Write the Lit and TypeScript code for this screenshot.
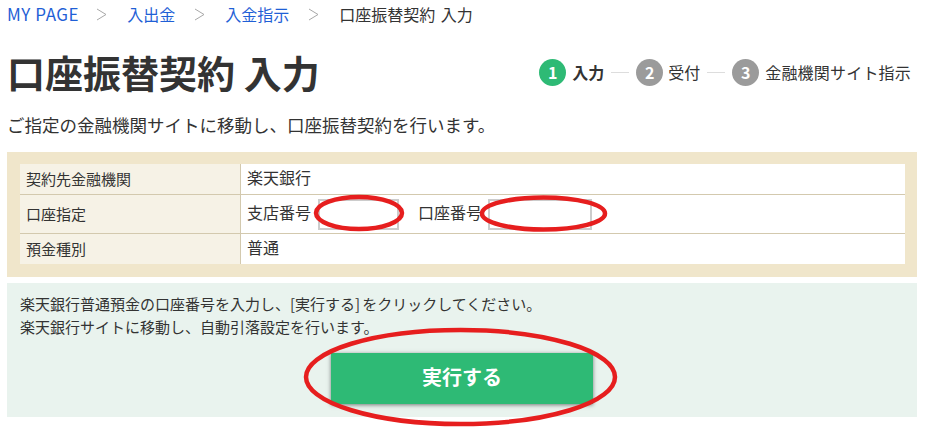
import { LitElement, css, html, svg } from "lit";
import { customElement, property } from "lit/decorators.js";

type Crumb = { label: string; link: boolean; latin?: boolean };
type Step = { num: number; label: string; active?: boolean };

const crumbs: Crumb[] = [
  { label: "MY PAGE", link: true, latin: true },
  { label: "入出金", link: true },
  { label: "入金指示", link: true },
  { label: "口座振替契約 入力", link: false },
];

const steps: Step[] = [
  { num: 1, label: "入力", active: true },
  { num: 2, label: "受付" },
  { num: 3, label: "金融機関サイト指示" },
];

// red marker circles drawn over the finished page
const marks = [
  { cx: 359, cy: 213, rx: 43, ry: 16 },
  { cx: 543.5, cy: 213.5, rx: 61.5, ry: 16 },
  { cx: 460.5, cy: 377, rx: 154.5, ry: 47 },
];

@customElement("app-root")
export class AppRoot extends LitElement {
  @property({ attribute: false })
  crumbs = crumbs;

  render() {
    return html`
      <div class="page">
        <nav class="crumbs">
          ${this.crumbs.map(
            (c, i) => html`
              ${i > 0
                ? html`<svg class="sep" width="11" height="13" viewBox="0 0 11 13">
                    <path d="M1 1l9 5.5L1 12" fill="none" stroke="#a8a8a8" stroke-width="1" />
                  </svg>`
                : ""}
              <span class="${c.link ? "link" : "here"} ${c.latin ? "latin" : ""}">${c.label}</span>
            `
          )}
        </nav>

        <header class="head">
          <h1>口座振替契約 入力</h1>
          <ol class="steps">
            ${steps.map(
              (s, i) => html`
                ${i > 0 ? html`<li class="dash"></li>` : ""}
                <li class=${s.active ? "step active" : "step"}>
                  <span class="num">${s.num}</span>
                  <span class="label">${s.label}</span>
                </li>
              `
            )}
          </ol>
        </header>

        <p class="lead">ご指定の金融機関サイトに移動し、口座振替契約を行います。</p>

        <section class="form">
          <div class="table">
            <div class="row">
              <div class="th">契約先金融機関</div>
              <div class="td">楽天銀行</div>
            </div>
            <div class="row tall">
              <div class="th">口座指定</div>
              <div class="td">
                <span>支店番号</span>
                <span class="input branch"></span>
                <span class="second">口座番号</span>
                <span class="input account"></span>
              </div>
            </div>
            <div class="row">
              <div class="th">預金種別</div>
              <div class="td">普通</div>
            </div>
          </div>
        </section>

        <section class="notice">
          <p>
            楽天銀行普通預金の口座番号を入力し、[実行する<span class="bracket">]</span
            >をクリックしてください。
          </p>
          <p>楽天銀行サイトに移動し、自動引落設定を行います。</p>
          <div class="action"><button>実行する</button></div>
        </section>

        <svg class="marks" width="943" height="441" viewBox="0 0 943 441">
          ${marks.map(
            (m) => svg`<ellipse cx=${m.cx} cy=${m.cy} rx=${m.rx} ry=${m.ry}
              fill="none" stroke="#e61e1e" stroke-width="4.5" />`
          )}
        </svg>
      </div>
    `;
  }

  static styles = css`
    :host {
      display: block;
      width: 943px;
      height: 441px;
      overflow: hidden;
      background: #fff;
      color: #333;
      font-family: "Noto Sans CJK JP", "Noto Sans", sans-serif;
    }
    .page {
      position: relative;
      box-sizing: border-box;
      height: 441px;
      padding: 0 26px 0 7px;
    }
    .crumbs {
      display: flex;
      align-items: center;
      height: 28px;
      font-size: 16px;
      line-height: 28px;
    }
    .sep {
      margin: 0 20px 0 19px;
    }
    .link {
      color: #1f5fd6;
    }
    .latin {
      font-size: 17px;
      letter-spacing: 0.55px;
      margin-right: -2px;
    }
    .here {
      color: #333;
      word-spacing: 2px;
    }
    .head {
      display: flex;
      justify-content: space-between;
      align-items: center;
      height: 58px;
      margin-top: 15px;
    }
    h1 {
      margin: 0;
      font-size: 38px;
      line-height: 58px;
      font-weight: 700;
      color: #333;
    }
    .steps {
      display: flex;
      align-items: center;
      list-style: none;
      margin: 0 6px 0 0;
      padding: 0;
      font-size: 16px;
      line-height: 27px;
    }
    .step {
      display: flex;
      align-items: center;
      gap: 5px;
    }
    .step.active,
    .step:last-child {
      gap: 6px;
    }
    .step.active {
      font-weight: 700;
    }
    .step:last-child .label {
      letter-spacing: 0.2px;
    }
    .num {
      width: 27px;
      height: 27px;
      border-radius: 50%;
      background: #9b9b9b;
      color: #fff;
      font-size: 16px;
      font-weight: 700;
      text-align: center;
    }
    .active .num {
      background: #2eba75;
    }
    .dash {
      width: 18px;
      height: 1px;
      margin: 0 7px;
      background: #ddd;
    }
    .lead {
      margin: 11px 0 0;
      height: 40px;
      font-size: 17.5px;
      line-height: 26px;
    }
    .form {
      box-sizing: border-box;
      height: 125px;
      width: 910px;
      padding: 12px 12px 13px 13px;
      background: #f0e6cb;
    }
    .table {
      background: #fff;
    }
    .row {
      display: grid;
      grid-template-columns: 220px 1fr;
      height: 30px;
      border-top: 1px solid #d3c9ae;
    }
    .row:first-child {
      border-top: 0;
    }
    .row.tall {
      height: 38px;
    }
    .th {
      box-sizing: border-box;
      display: flex;
      align-items: center;
      padding: 0 0 1px 6px;
      background: #f6f2e6;
      border-right: 1px solid #d3c9ae;
      font-size: 15px;
      width: 221px;
    }
    .td {
      display: flex;
      align-items: center;
      padding-left: 6px;
      font-size: 16px;
      margin-left: 1px;
      margin-top: -4px;
    }
    .input {
      box-sizing: border-box;
      height: 31px;
      border: 2px solid #ccc;
      margin-top: 4px;
      margin-left: 6px;
    }
    .branch {
      width: 81px;
      margin-left: 7px;
    }
    .account {
      width: 104px;
    }
    .second {
      margin-left: 19px;
    }
    .notice {
      box-sizing: border-box;
      width: 910px;
      height: 134px;
      margin-top: 6px;
      padding: 9px 13px 0;
      background: #e9f3ee;
      font-size: 15px;
      line-height: 23px;
    }
    .notice p {
      margin: 0;
    }
    .bracket {
      padding-right: 2px;
    }
    .action {
      display: flex;
      justify-content: center;
      margin: 15px 0 0;
    }
    button {
      width: 262px;
      height: 51px;
      border: 0;
      padding: 0 0 4px;
      background: #2eba75;
      color: #fff;
      font: 700 20px/1.4 "Noto Sans CJK JP", sans-serif;
      box-shadow: 0 1px 4px rgba(0, 0, 0, 0.5);
    }
    .marks {
      position: absolute;
      left: 0;
      top: 0;
      pointer-events: none;
    }
  `;
}
